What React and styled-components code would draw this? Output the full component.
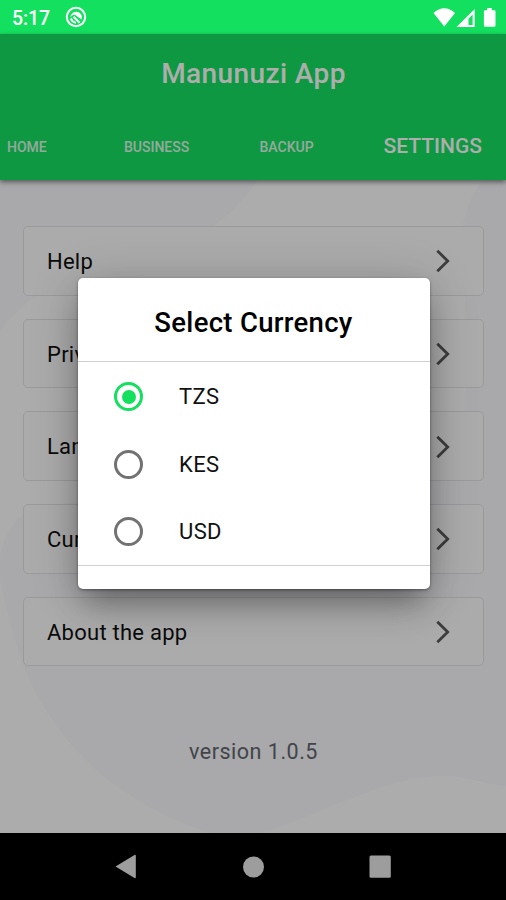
import React, { useState } from 'react';
import styled, { createGlobalStyle } from 'styled-components';

const GlobalStyle = createGlobalStyle`
  * {
    box-sizing: border-box;
  }

  body {
    margin: 0;
    font-family: Roboto, sans-serif;
    background: #000;
  }
`;

const Phone = styled.div`
  width: 506px;
  height: 900px;
  display: flex;
  flex-direction: column;
  overflow: hidden;
`;

const StatusBar = styled.div`
  height: 34px;
  flex-shrink: 0;
  display: flex;
  align-items: center;
  padding: 0 9px 0 12px;
  background: #14e060;
  color: #fff;
`;

const Clock = styled.span`
  width: 53px;
  padding-top: 3px;
  font-size: 19.5px;
  font-weight: 500;
  letter-spacing: -0.1px;
`;

const StatusIcons = styled.svg`
  margin-left: auto;
`;

const Screen = styled.div`
  position: relative;
  flex: 1;
  display: flex;
  flex-direction: column;
  background: #f9f8fd;
`;

const Backdrop = styled.svg`
  position: absolute;
  inset: 0;
`;

const Header = styled.header`
  position: relative;
  height: 146px;
  flex-shrink: 0;
  background: #14e060;
  color: #fff;
  box-shadow: 0 2px 5px rgba(0, 0, 0, 0.5);
`;

const AppTitle = styled.h1`
  margin: 0;
  padding: 22px 0 0 1px;
  text-align: center;
  font-size: 28px;
  line-height: 36px;
  font-weight: 500;
  letter-spacing: 0.4px;
`;

const Tabs = styled.nav`
  display: grid;
  grid-template-columns: 117px 135.5px 124px 1fr;
  align-items: center;
  height: 40px;
  margin-top: 34px;
  padding-left: 7px;
`;

const Tab = styled.span`
  padding-top: ${props => (props.$active ? '0' : '2px')};
  font-size: ${props => (props.$active ? '21px' : '14px')};
  font-weight: 500;
  opacity: ${props => (props.$active ? 1 : 0.85)};
`;

const Content = styled.main`
  position: relative;
  display: flex;
  flex-direction: column;
  gap: 23px;
  padding: 46px 22px 0 23px;
`;

const SettingCard = styled.div`
  height: 69.7px;
  display: flex;
  align-items: center;
  justify-content: space-between;
  padding: 1px 32px 0 23px;
  border: 1.5px solid #e4e4e6;
  border-radius: 5px;
  background: rgba(253, 253, 253, 0.88);
  color: #111;
  font-size: 22px;
  letter-spacing: 0.25px;
`;

const Version = styled.p`
  margin: 49px 0 0;
  text-align: center;
  color: #60666c;
  font-size: 21.5px;
  line-height: 28px;
  letter-spacing: 0.5px;
`;

const Scrim = styled.div`
  position: absolute;
  inset: 0;
  display: flex;
  align-items: center;
  justify-content: center;
  padding-left: 1px;
  background: rgba(0, 0, 0, 0.32);
`;

const Dialog = styled.div`
  width: 352px;
  height: 311px;
  border-radius: 5px;
  background: #fff;
  box-shadow: 0 18px 30px -6px rgba(0, 0, 0, 0.34), 0 6px 50px rgba(0, 0, 0, 0.19),
    0 1px 3px rgba(0, 0, 0, 0.4);
`;

const DialogTitle = styled.h2`
  margin: 0;
  height: 84px;
  padding-top: 6px;
  display: flex;
  align-items: center;
  justify-content: center;
  border-bottom: 1px solid #d0d0d0;
  color: #000;
  font-size: 27.5px;
  font-weight: 500;
  letter-spacing: 0.3px;
`;

const Options = styled.div`
  padding-top: 1px;
  border-bottom: 1px solid #d0d0d0;
`;

const Option = styled.label`
  height: 67.4px;
  display: flex;
  align-items: center;
  gap: 36.6px;
  padding-left: 36px;
  color: #111;
  font-size: 22px;
  letter-spacing: 0.3px;
  cursor: pointer;
`;

const Radio = styled.input`
  appearance: none;
  width: 29px;
  height: 29px;
  margin: 0;
  padding: 4.5px;
  border: 3px solid ${props => (props.checked ? '#14e060' : '#727272')};
  border-radius: 50%;
  background: ${props => (props.checked ? '#14e060' : 'transparent')};
  background-clip: content-box;
`;

const NavBar = styled.div`
  height: 67px;
  flex-shrink: 0;
  display: flex;
  justify-content: center;
  background: #000;
`;

const settings = ['Help', 'Privacy Policy', 'Language', 'Currency', 'About the app'];
const currencies = ['TZS', 'KES', 'USD'];

const Chevron = () => (
  <svg width="15" height="24" viewBox="0 0 15 24" fill="none">
    <path d="M1.3 1.7 11.7 12 1.3 22.3" stroke="#5a5a5a" strokeWidth="2.8" />
  </svg>
);

const App = () => {
  const [currency, setCurrency] = useState('TZS');

  return (
    <>
      <GlobalStyle />
      <Phone>
        <StatusBar>
          <Clock>5:17</Clock>
          <svg width="22" height="22" viewBox="0 0 22 22" fill="none" stroke="#fff">
            <circle cx="11" cy="11" r="9.2" strokeWidth="2" />
            <path
              d="M5.5 11.5a5.8 5.8 0 0 1 10.7-2.9c.9 1.6.9 3.2.2 4.900l-5.8-4.300c-1.7-.8-3.5-.2-5.1 2.300Z"
              fill="#fff"
              stroke="none"
            />
            <path d="m8.5 10.8 6 6M6 12.5c.6 2.2 2.2 3.8 4.8 4.2" strokeWidth="2" />
          </svg>
          <StatusIcons width="64" height="22" viewBox="0 0 64 22" fill="#fff">
            <path d="M0.5 7C7 .7 15.5 .7 22 7L11.3 20.5Z" />
            <path
              fillRule="evenodd"
              d="M41.7 3v18H23.5ZM39.6 8.500 33 15.200v3.800h6.600Z"
            />
            <path d="M32.500 12.500h3V19h-3Z" />
            <path d="M54.2 2h4.600v2.200h2.400q1.300 0 1.300 1.300v14q0 1.300-1.300 1.300h-9q-1.300 0-1.300-1.300v-14q0-1.300 1.300-1.300h2Z" />
          </StatusIcons>
        </StatusBar>

        <Screen>
          <Backdrop width="506" height="799" viewBox="0 0 506 799" fill="#fefefe">
            <path d="M268 130C245 165 228 190 185 204C120 225 40 240 0 297V522C6 495 18 478 42 473C120 455 390 470 445 440C475 400 466 290 462 205C463 180 470 165 482 146V130Z" />
            <path d="M0 545C6 575 15 610 27 640C58 712 120 770 210 799H0Z" />
            <path d="M260 799C325 780 385 742 440 742C465 741 482 750 506 752V799Z" />
          </Backdrop>

          <Header>
            <AppTitle>Manunuzi App</AppTitle>
            <Tabs>
              <Tab>HOME</Tab>
              <Tab>BUSINESS</Tab>
              <Tab>BACKUP</Tab>
              <Tab $active>SETTINGS</Tab>
            </Tabs>
          </Header>

          <Content>
            {settings.map(label => (
              <SettingCard key={label}>
                {label}
                <Chevron />
              </SettingCard>
            ))}
            <Version>version 1.0.5</Version>
          </Content>

          <Scrim>
            <Dialog>
              <DialogTitle>Select Currency</DialogTitle>
              <Options>
                {currencies.map(code => (
                  <Option key={code}>
                    <Radio
                      type="radio"
                      name="currency"
                      checked={currency === code}
                      onChange={() => setCurrency(code)}
                    />
                    {code}
                  </Option>
                ))}
              </Options>
            </Dialog>
          </Scrim>
        </Screen>

        <NavBar>
          <svg width="506" height="67" viewBox="0 0 506 67" fill="#9d9d9d">
            <path d="M115.5 33.5 134.5 22q1.3-.5 1.300.8v21.400q0 1.300-1.300.8Z" />
            <circle cx="253.5" cy="34" r="10.5" />
            <rect x="369.5" y="22.5" width="21.3" height="22.3" rx="1.5" />
          </svg>
        </NavBar>
      </Phone>
    </>
  );
};

export default App;
